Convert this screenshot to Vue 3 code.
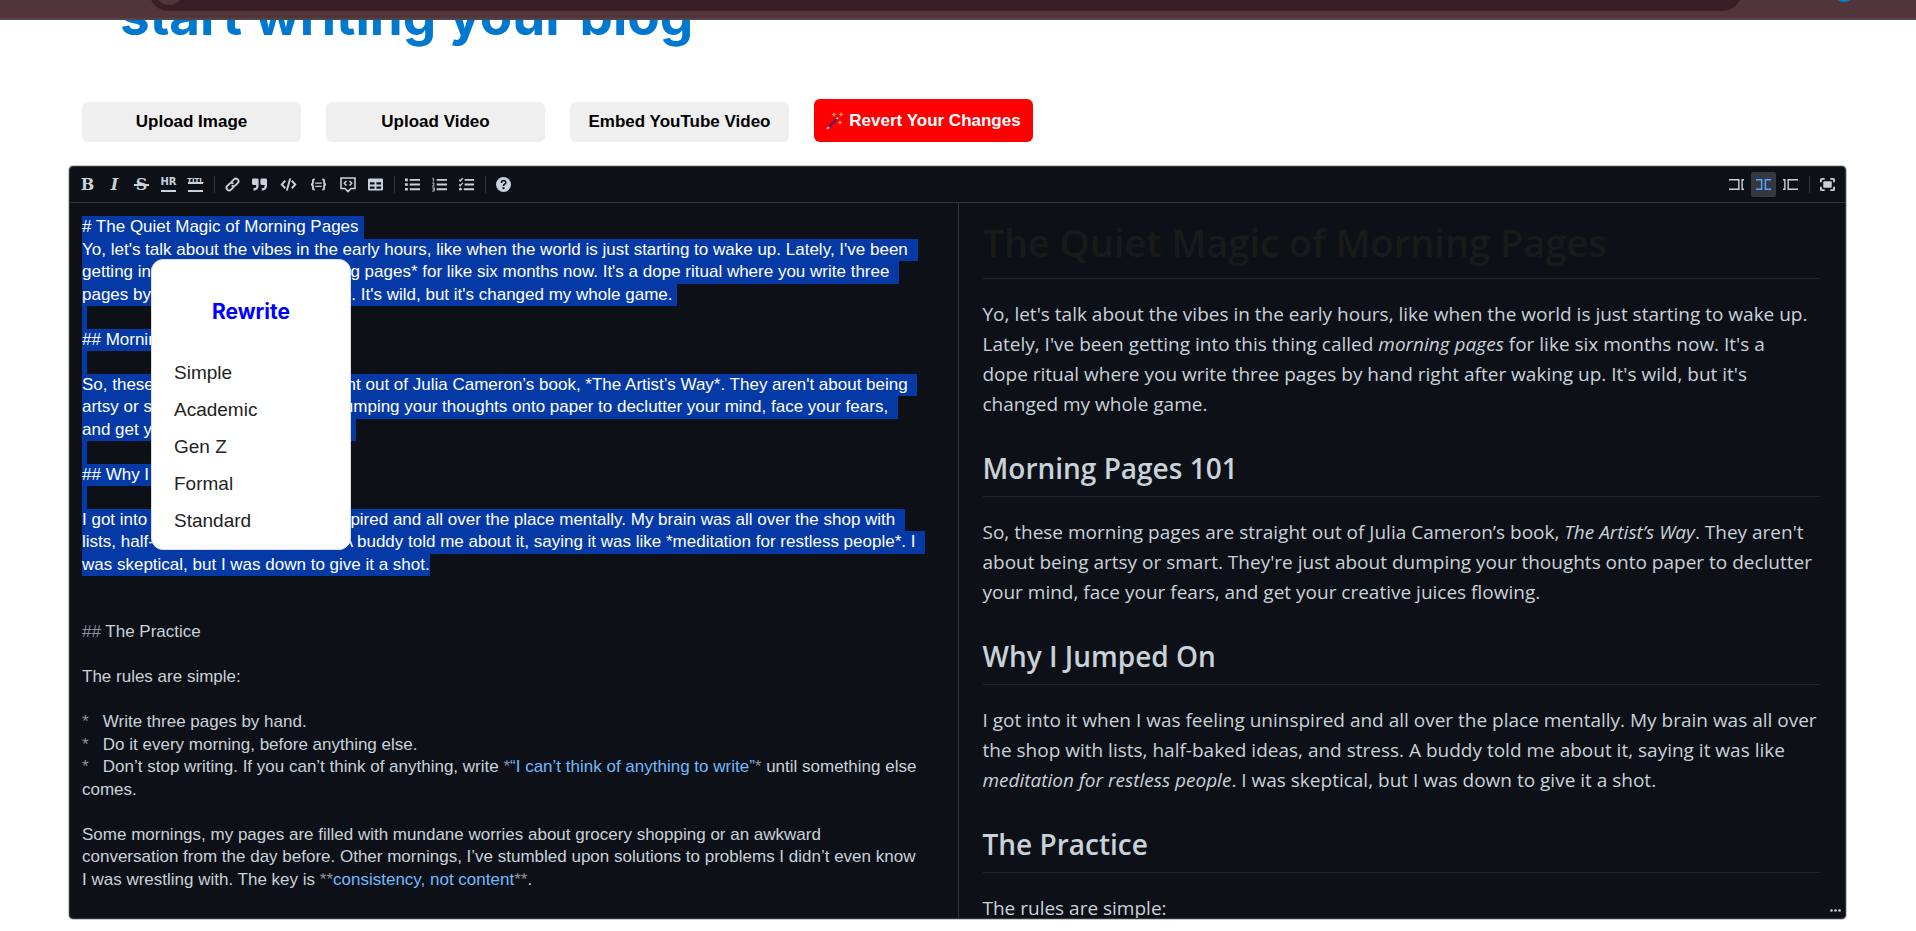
<script setup>
import { ref } from 'vue'

const uploads = ['Upload Image', 'Upload Video', 'Embed YouTube Video']
const tones = ['Simple', 'Academic', 'Gen Z', 'Formal', 'Standard']

const plain = (text) => [{ kind: 'text', text }]
const bullet = (text) => [{ kind: 'mark', text: '*' }, { kind: 'text', text: '   ' + text }]

const selected = [
  '# The Quiet Magic of Morning Pages',
  "Yo, let's talk about the vibes in the early hours, like when the world is just starting to wake up. Lately, I've been ",
  "getting into this thing called *morning pages* for like six months now. It's a dope ritual where you write three ",
  "pages by hand right after waking up. It's wild, but it's changed my whole game.",
  '',
  '## Morning Pages 101',
  '',
  "So, these morning pages are straight out of Julia Cameron’s book, *The Artist’s Way*. They aren't about being ",
  "artsy or smart. They're just about dumping your thoughts onto paper to declutter your mind, face your fears, ",
  'and get your creative juices flowing.',
  '',
  '## Why I Jumped On',
  '',
  'I got into it when I was feeling uninspired and all over the place mentally. My brain was all over the shop with ',
  'lists, half-baked ideas, and stress. A buddy told me about it, saying it was like *meditation for restless people*. I ',
  'was skeptical, but I was down to give it a shot.',
]

const remaining = [
  plain(''),
  plain(''),
  [{ kind: 'mark', text: '##' }, { kind: 'text', text: ' The Practice' }],
  plain(''),
  plain('The rules are simple:'),
  plain(''),
  bullet('Write three pages by hand.'),
  bullet('Do it every morning, before anything else.'),
  [
    ...bullet('Don’t stop writing. If you can’t think of anything, write '),
    { kind: 'mark', text: '*' },
    { kind: 'strong', text: '“I can’t think of anything to write”' },
    { kind: 'mark', text: '*' },
    { kind: 'text', text: ' until something else' },
  ],
  plain('comes.'),
  plain(''),
  plain('Some mornings, my pages are filled with mundane worries about grocery shopping or an awkward'),
  plain('conversation from the day before. Other mornings, I’ve stumbled upon solutions to problems I didn’t even know'),
  [
    { kind: 'text', text: 'I was wrestling with. The key is ' },
    { kind: 'mark', text: '**' },
    { kind: 'strong', text: 'consistency, not content' },
    { kind: 'mark', text: '**' },
    { kind: 'text', text: '.' },
  ],
]

const draft = ref(
  [...selected, ...remaining.map((line) => line.map((part) => part.text).join(''))].join('\n')
)
</script>

<template>
  <div class="page">
    <header class="browser">
      <div class="omnibox"><span class="site"></span></div>
      <span class="profile"></span>
    </header>

    <main class="content">
      <h1 class="title">start writing your blog</h1>

      <div class="actions">
        <button v-for="label in uploads" :key="label" type="button" class="action">{{ label }}</button>
        <button type="button" class="action revert">
          <svg class="wand" viewBox="0 0 18 18" aria-hidden="true">
            <path d="M1.500 16.500 12 5.500" stroke="#4a1f6b" stroke-width="2" />
            <path d="M1 17 3 15" stroke="#cdb8e0" stroke-width="2" />
            <path d="M10.500 7 12 5.500" stroke="#c9a7dd" stroke-width="2" />
            <path d="M8 0l.8 1.800 1.800.7-1.800.8L8 5l-.8-1.700-1.800-.8 1.800-.7zM15 0l.8 1.800 1.800.7-1.800.8L15 5l-.8-1.700-1.800-.8 1.800-.7zM14 8l.8 1.800 1.800.7-1.800.8L14 13l-.8-1.700-1.800-.8 1.800-.7z" fill="#ffa04a" />
          </svg>
          Revert Your Changes
        </button>
      </div>

      <section class="editor">
        <div class="toolbar">
          <div class="tools">
            <button type="button" class="tool serif" title="Bold">B</button>
            <button type="button" class="tool serif italic" title="Italic">I</button>
            <button type="button" class="tool serif strike" title="Strikethrough">S</button>
            <button type="button" class="tool rule" title="Horizontal rule">HR</button>
            <button type="button" class="tool heading" title="Title">TITL</button>
            <span class="divider"></span>
            <button type="button" class="tool" aria-label="Link">
              <svg viewBox="0 0 16 16" fill="none" stroke="currentColor" stroke-width="2">
                <g transform="rotate(-45 8 8)">
                  <path d="M7.500 10.800H3a2.800 2.800 0 0 1 0-5.600h3.500a2.800 2.800 0 0 1 2.800 2.800" />
                  <path d="M8.500 5.200H13a2.800 2.800 0 0 1 0 5.600H9.500A2.800 2.800 0 0 1 6.700 8" />
                </g>
              </svg>
            </button>
            <button type="button" class="tool" aria-label="Quote">
              <svg viewBox="0 0 16 16" fill="currentColor">
                <path d="M1.500 1.500h4A1.500 1.500 0 0 1 7 3v6.500a5 5 0 0 1-5 5h-.5v-2.500H2a2.500 2.500 0 0 0 2.500-2.500V8.500h-3A1.500 1.500 0 0 1 0 7V3a1.500 1.500 0 0 1 1.500-1.500zM10.500 1.500h4A1.500 1.500 0 0 1 16 3v6.500a5 5 0 0 1-5 5h-.5v-2.500h.5a2.500 2.500 0 0 0 2.500-2.500V8.500h-3A1.500 1.500 0 0 1 9 7V3a1.500 1.500 0 0 1 1.500-1.500z" />
              </svg>
            </button>
            <button type="button" class="tool wide" aria-label="Code">
              <svg viewBox="0 0 18 16" fill="none" stroke="currentColor" stroke-width="2">
                <path d="M5.500 4 1.800 8l3.700 4M12.500 4l3.700 4-3.700 4M10.800 1.500 7.200 14.500" />
              </svg>
            </button>
            <button type="button" class="tool wide" aria-label="Code block">
              <svg viewBox="0 0 18 16" fill="none" stroke="currentColor" stroke-width="2">
                <path d="M5 2.500H4.500q-1.500 0-1.500 1.500v2.500Q3 8 1 8 3 8 3 9.500V12q0 1.500 1.500 1.500H5M13 2.500h.5Q15 2.500 15 4v2.500Q15 8 17 8 15 8 15 9.500V12q0 1.500-1.500 1.500H13" />
                <path d="M5.500 6.500h7M5.500 10h7" stroke-width="1.200" />
              </svg>
            </button>
            <button type="button" class="tool comment" aria-label="Comment">
              <svg viewBox="0 0 16 16" fill="none" stroke="currentColor" stroke-width="1.600">
                <path d="M1 1h14v10.500h-4L8 14.500 5 11.500H1zM6.500 4 4.300 6.300l2.200 2.200M9.500 4l2.200 2.300-2.200 2.200" />
              </svg>
            </button>
            <button type="button" class="tool" aria-label="Table">
              <svg viewBox="0 0 16 16" fill="currentColor" fill-rule="evenodd">
                <path d="M1.500 1.500h13A1.500 1.500 0 0 1 16 3v10a1.500 1.500 0 0 1-1.500 1.500h-13A1.500 1.500 0 0 1 0 13V3a1.500 1.500 0 0 1 1.500-1.500zM2 5.500v2.500h5V5.500zM9 5.500v2.500h5V5.500zM2 10v2.500h5V10zM9 10v2.500h5V10z" />
              </svg>
            </button>
            <span class="divider"></span>
            <button type="button" class="tool" aria-label="Unordered list">
              <svg viewBox="0 0 16 16" fill="none" stroke="currentColor" stroke-width="2">
                <path d="M5 3h11M5 8h11M5 13h11" />
                <path d="M0 3h3M0 8h3M0 13h3" stroke-width="2.800" />
              </svg>
            </button>
            <button type="button" class="tool" aria-label="Ordered list">
              <svg viewBox="0 0 16 16" fill="none" stroke="currentColor" stroke-width="2">
                <path d="M5 3h11M5 8h11M5 13h11" />
                <path d="M.5 1.500h1V5M.2 6.500h2v1.500L.5 9.500h2.200M.2 11.500h2.200V15H.2M1 13h1" stroke-width="1" />
              </svg>
            </button>
            <button type="button" class="tool" aria-label="Task list">
              <svg viewBox="0 0 16 16" fill="none" stroke="currentColor" stroke-width="2">
                <path d="M6 3h10M6 8h10M5 13h11" />
                <path d="m0 3 1.300 1.300L4 1.300M0 8l1.300 1.300L4 6.300" stroke-width="1.400" />
                <circle cx="1.500" cy="13" r="1.500" fill="currentColor" stroke="none" />
              </svg>
            </button>
            <span class="divider"></span>
            <button type="button" class="tool" aria-label="Help">
              <svg viewBox="0 0 16 16">
                <circle cx="8" cy="8" r="8" fill="currentColor" />
                <path d="M5.700 6.200q.2-2.400 2.400-2.400 2.300 0 2.300 2 0 1.200-1.200 1.800Q8 8.200 8 9.500" fill="none" stroke="#0d1117" stroke-width="1.700" />
                <circle cx="8" cy="11.900" r="1.200" fill="#0d1117" />
              </svg>
            </button>
          </div>
          <div class="tools">
            <button type="button" class="tool" aria-label="Edit only">
              <svg viewBox="0 0 16 16" fill="none" stroke="currentColor" stroke-width="1.500">
                <path d="M0 3h10.500v10H0M16 3h-2v10h2" />
              </svg>
            </button>
            <button type="button" class="tool active" aria-label="Live preview">
              <svg viewBox="0 0 16 16" fill="none" stroke="currentColor" stroke-width="1.500">
                <path d="M0 3h6v10H0M16 3h-6v10h6" />
              </svg>
            </button>
            <button type="button" class="tool" aria-label="Preview only">
              <svg viewBox="0 0 16 16" fill="none" stroke="currentColor" stroke-width="1.500">
                <path d="M16 3H5.500v10H16M0 3h2v10H0" />
              </svg>
            </button>
            <span class="divider"></span>
            <button type="button" class="tool" aria-label="Fullscreen">
              <svg viewBox="0 0 16 16" fill="none" stroke="currentColor" stroke-width="2">
                <path d="M1 5.500V3q0-1 1-1h3M11 2h3q1 0 1 1v2.500M15 10.500V13q0 1-1 1h-3M5 14H2q-1 0-1-1v-2.500" />
                <rect x="3.500" y="4.500" width="9" height="7" rx="1" fill="currentColor" stroke="none" />
              </svg>
            </button>
          </div>
        </div>

        <div class="panes">
          <div class="source">
            <div class="code" aria-hidden="true">
              <div v-for="(line, i) in selected" :key="'s' + i" class="line"><span class="picked" :class="{ last: i === selected.length - 1 }">{{ line }}</span></div>
              <div v-for="(line, i) in remaining" :key="'r' + i" class="line"><span v-for="(part, j) in line" :key="j" :class="part.kind">{{ part.text }}</span></div>
            </div>
            <textarea v-model="draft" class="input" aria-label="Markdown source" spellcheck="false"></textarea>
          </div>

          <article class="preview">
            <h1>The Quiet Magic of Morning Pages</h1>
            <p>Yo, let's talk about the vibes in the early hours, like when the world is just starting to wake up. Lately, I've been getting into this thing called <em>morning pages</em> for like six months now. It's a<br>dope ritual where you write three pages by hand right after waking up. It's wild, but it's<br>changed my whole game.</p>
            <h2>Morning Pages 101</h2>
            <p>So, these morning pages are straight out of Julia Cameron’s book, <em>The Artist’s Way</em>. They aren't about being artsy or smart. They're just about dumping your thoughts onto paper to declutter your mind, face your fears, and get your creative juices flowing.</p>
            <h2>Why I Jumped On</h2>
            <p>I got into it when I was feeling uninspired and all over the place mentally. My brain was all over the shop with lists, half-baked ideas, and stress. A buddy told me about it, saying it was like <em>meditation for restless people</em>. I was skeptical, but I was down to give it a shot.</p>
            <h2>The Practice</h2>
            <p>The rules are simple:</p>
          </article>
        </div>

        <svg class="grip" viewBox="0 0 12 3" fill="#c9d1d9" aria-hidden="true">
          <circle cx="1.500" cy="1.500" r="1.300" /><circle cx="5.500" cy="1.500" r="1.300" /><circle cx="9.500" cy="1.500" r="1.300" />
        </svg>

        <div class="popup">
          <h2>Rewrite</h2>
          <button v-for="tone in tones" :key="tone" type="button">{{ tone }}</button>
        </div>
      </section>
    </main>
  </div>
</template>

<style>
body {
  background: #fff;
}
</style>

<style scoped>
.page,
.page * {
  box-sizing: border-box;
}
.page {
  font-family: "Liberation Sans", Arial, sans-serif;
}
button {
  border: 0;
  font-family: inherit;
}
.browser {
  position: relative;
  z-index: 1;
  display: flex;
  align-items: flex-end;
  justify-content: space-between;
  height: 20px;
  padding: 0 62px 7px 149px;
  overflow: hidden;
  background: #513539;
  border-bottom: 2px solid #504549;
}
.omnibox {
  flex: 1;
  display: flex;
  align-items: center;
  height: 40px;
  margin-right: 92px;
  padding-left: 6px;
  border-radius: 20px;
  background: #391f25;
}
.site {
  width: 28px;
  height: 28px;
  border-radius: 14px;
  background: #513539;
}
.profile {
  width: 20px;
  height: 20px;
  margin-bottom: 9px;
  border-radius: 10px;
  background: #0084d4;
}
.content {
  padding: 0 70px 12px 69px;
}
.title {
  margin: -42px 0 0;
  padding-left: 51px;
  font: 700 53px/76px Inter, sans-serif;
  color: #0078d0;
}
.actions {
  display: flex;
  align-items: flex-end;
  gap: 25px;
  margin-top: 45px;
  padding-left: 13px;
}
.action {
  display: flex;
  align-items: center;
  justify-content: center;
  gap: 5px;
  width: 219px;
  height: 40px;
  border-radius: 6px;
  background: #efefef;
  color: #000;
  font-size: 17px;
  font-weight: 700;
  white-space: nowrap;
}
.revert {
  height: 43px;
  background: #f00;
  color: #fff;
}
.wand {
  width: 18px;
  height: 18px;
}
.editor {
  position: relative;
  margin-top: 24px;
  border: 1px solid #30363d;
  border-radius: 4px;
  box-shadow: 0 0 0 1px #c4c9cc;
  background: #0d1117;
  color: #c9d1d9;
}
.toolbar {
  display: flex;
  justify-content: space-between;
  padding: 5px;
  border-bottom: 1px solid #30363d;
}
.tools {
  display: flex;
  align-items: center;
  gap: 2px;
}
.tool {
  position: relative;
  display: flex;
  align-items: center;
  justify-content: center;
  width: 25px;
  height: 25px;
  padding: 0;
  border-radius: 2px;
  background: none;
  color: #c9d1d9;
}
.tool svg {
  width: 15px;
  height: 15px;
}
.tool.wide {
  width: 28px;
}
.tool.wide svg {
  width: 17px;
}
.tool.comment {
  width: 27px;
}
.tool.comment svg {
  width: 16px;
  height: 16px;
}
.tool.active {
  background: #343941;
  color: #58a6ff;
}
.tool.serif {
  font: 700 16px/25px "DejaVu Serif", serif;
}
.tool.italic {
  font-style: italic;
}
.tool.strike::after,
.tool.rule::after,
.tool.heading::after {
  content: "";
  position: absolute;
  left: 5px;
  right: 5px;
  height: 2px;
  background: #c9d1d9;
}
.tool.strike::after {
  top: 12px;
}
.tool.rule {
  align-items: flex-start;
  padding-top: 5px;
  font: 700 10px/10px "DejaVu Sans", sans-serif;
}
.tool.rule::after {
  bottom: 5px;
}
.tool.heading {
  align-items: flex-start;
  padding-top: 5px;
  font: 700 7px/8px "DejaVu Sans", sans-serif;
}
.tool.heading::after {
  bottom: 5px;
  height: 6px;
  border: solid #c9d1d9;
  border-width: 2px 0;
  background: none;
}
.divider {
  width: 1px;
  height: 17px;
  margin: 0 3px 0 4px;
  background: #30363d;
}
.panes {
  display: grid;
  grid-template-columns: 1fr 1fr;
}
.source {
  position: relative;
  min-width: 0;
  padding: 13px 12px 27px;
  font-size: 17px;
  line-height: 1.325;
}
.line {
  white-space: pre;
}
.line span:empty::before {
  content: "\200b";
}
.picked {
  display: inline-block;
  padding-right: 5px;
  background: #0439a6;
  color: #fff;
  vertical-align: top;
}
.picked.last {
  padding-right: 0;
}
.mark {
  color: #8b949e;
}
.strong {
  color: #70bbff;
}
.input {
  position: absolute;
  inset: 0;
  width: 100%;
  height: 100%;
  padding: 13px 0 0 12px;
  border: 0;
  outline: 0;
  overflow: hidden;
  resize: none;
  background: transparent;
  color: transparent;
  font: inherit;
  white-space: pre;
}
.preview {
  height: 0;
  min-height: 100%;
  padding: 14px 25px 0 24px;
  overflow: hidden;
  border-left: 1px solid #30363d;
  font: 19px/30px "Open Sans", "Noto Sans", sans-serif;
}
.preview h1,
.preview h2 {
  margin: 30px 0 20px;
  padding-bottom: 9px;
  border-bottom: 1px solid #21262d;
  font-size: 28px;
  font-weight: 600;
  line-height: 38px;
}
.preview h1 {
  margin-top: 0;
  padding-bottom: 11px;
  font-size: 38px;
  line-height: 50px;
  color: #1a1a1a;
}
.preview p {
  margin: 0;
}
.grip {
  position: absolute;
  right: 3px;
  bottom: 6px;
  width: 12px;
  height: 3px;
}
.popup {
  position: absolute;
  top: 92px;
  left: 81px;
  display: flex;
  flex-direction: column;
  width: 200px;
  padding: 32px 0 10px;
  border: 1px solid #ddd;
  border-radius: 12px;
  background: #fff;
}
.popup h2 {
  margin: 0 0 22px;
  font: 700 21px/40px Inter, sans-serif;
  text-align: center;
  color: #00f;
}
.popup button {
  height: 37px;
  padding: 0 22px;
  background: none;
  color: #222;
  font-size: 19px;
  text-align: left;
}
</style>
